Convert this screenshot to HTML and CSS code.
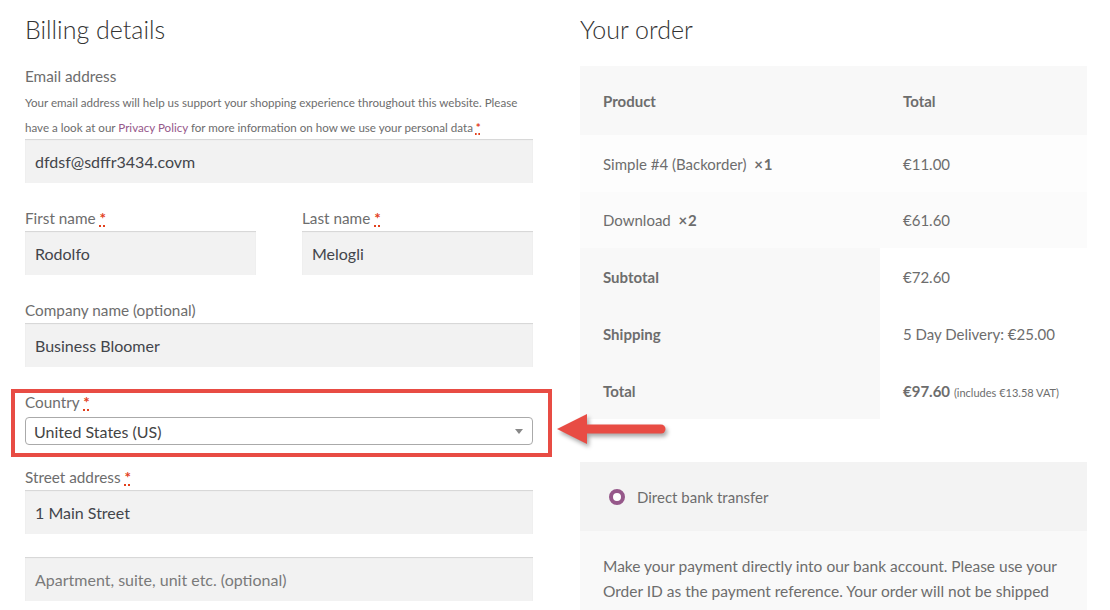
FILE: index.html
```html
<!DOCTYPE html>
<html>
<head>
<meta charset="utf-8">
<link rel="stylesheet" href="styles.css">
</head>
<body>
<div class="page">
  <div class="col billing">
    <h3 class="title">Billing details</h3>
    <div class="field">
      <label class="lbl">Email address</label>
      <p class="desc">Your email address will help us support your shopping experience throughout this website. Please have a look at our <a class="link">Privacy Policy</a> for more information on how we use your personal data <abbr class="req">*</abbr></p>
      <div class="input">dfdsf@sdffr3434.covm</div>
    </div>
    <div class="row2">
      <div class="field">
        <label class="lbl">First name <abbr class="req">*</abbr></label>
        <div class="input">Rodolfo</div>
      </div>
      <div class="field">
        <label class="lbl">Last name <abbr class="req">*</abbr></label>
        <div class="input">Melogli</div>
      </div>
    </div>
    <div class="field">
      <label class="lbl">Company name (optional)</label>
      <div class="input">Business Bloomer</div>
    </div>
    <div class="field country">
      <label class="lbl">Country <abbr class="req">*</abbr></label>
      <div class="select"><span>United States (US)</span><span class="caret"></span></div>
      <div class="highlight"></div>
      <svg class="arrow" width="120" height="44" viewBox="0 0 120 44">
        <line x1="30" y1="20" x2="106" y2="20" stroke="#e84c44" stroke-width="9" stroke-linecap="round"/>
        <polygon points="2,20 32,5 32,35" fill="#e84c44"/>
      </svg>
    </div>
    <div class="field">
      <label class="lbl">Street address <abbr class="req">*</abbr></label>
      <div class="input">1 Main Street</div>
    </div>
    <div class="field">
      <div class="input placeholder">Apartment, suite, unit etc. (optional)</div>
    </div>
  </div>
  <div class="col order">
    <h3 class="title">Your order</h3>
    <table class="otable">
      <thead>
        <tr><th class="c1">Product</th><th class="c2">Total</th></tr>
      </thead>
      <tbody>
        <tr class="r1"><td>Simple #4 (Backorder)&nbsp; <strong>×&#8202;1</strong></td><td>€11.00</td></tr>
        <tr class="r2"><td>Download&nbsp; <strong>×&#8202;2</strong></td><td>€61.60</td></tr>
      </tbody>
      <tfoot>
        <tr><th>Subtotal</th><td>€72.60</td></tr>
        <tr><th>Shipping</th><td>5 Day Delivery: €25.00</td></tr>
        <tr><th>Total</th><td><strong>€97.60</strong> <small>(includes €13.58 VAT)</small></td></tr>
      </tfoot>
    </table>
    <div class="payment">
      <div class="method"><span class="radio"></span><span>Direct bank transfer</span></div>
      <div class="pbox">Make your payment directly into our bank account. Please use your Order ID as the payment reference. Your order will not be shipped</div>
    </div>
  </div>
</div>
</body>
</html>
```
FILE: styles.css
```css
html, body {
  margin: 0;
  padding: 0;
  background: #fff;
  overflow: hidden;
}
body {
  font-family: "Lato", "Noto Sans", sans-serif;
  font-size: 15px;
  color: #6d6d6d;
}
.page {
  display: grid;
  grid-template-columns: 508px 507px;
  column-gap: 47px;
  padding: 12px 0 0 25px;
  height: 598px;
  overflow: hidden;
}
.title {
  margin: 0;
  font-size: 25px;
  font-weight: 300;
  line-height: 34px;
  color: #333;
}
.field {
  display: flex;
  flex-direction: column;
  margin-bottom: 23px;
}
.billing .title { margin-bottom: 18px; }
.lbl {
  display: block;
  line-height: 24px;
  height: 24px;
  margin-bottom: 1px;
  color: #6d6d6d;
  font-size: 15.3px;
}
.desc {
  margin: 1px 0 0;
  height: 49px;
  font-size: 11.6px;
  line-height: 25px;
  color: #6d6d6d;
}
.link { color: #96588a; }
.req {
  color: #e2401c;
  text-decoration: underline dotted #e2401c;
  text-decoration-thickness: 2px;
  font-weight: 700;
  border: 0;
}
.input {
  height: 44px;
  box-sizing: border-box;
  background: #f2f2f2;
  box-shadow: inset 0 1px 1px rgba(0,0,0,.12);
  padding: 0 10px;
  display: flex;
  align-items: center;
  color: #43454b;
  font-size: 16px;
}
.input.placeholder { color: #7a7a7a; }
.row2 {
  display: grid;
  grid-template-columns: 231px 231px;
  column-gap: 46px;
}
.country {
  position: relative;
  margin-bottom: 20px;
}
.select {
  margin-top: 2px;
  height: 28px;
  box-sizing: border-box;
  border: 1px solid #aaa;
  border-radius: 4px;
  background: #fff;
  display: flex;
  align-items: center;
  justify-content: space-between;
  padding: 0 9px 0 8px;
  color: #444;
  font-size: 16px;
}
.caret {
  width: 0;
  height: 0;
  border-left: 4px solid transparent;
  border-right: 4px solid transparent;
  border-top: 5px solid #888;
}
.highlight {
  position: absolute;
  left: -14px;
  top: -1px;
  width: 533px;
  height: 60px;
  border: 4px solid #e84c44;
  pointer-events: none;
}
.arrow {
  position: absolute;
  left: 530px;
  top: 19px;
  filter: drop-shadow(2px 3px 2px rgba(0,0,0,.35));
}
.order .title { margin-bottom: 20px; }
.otable {
  width: 507px;
  border-collapse: collapse;
  border-spacing: 0;
}
.otable th, .otable td {
  text-align: left;
  padding: 0 0 0 23px;
  font-size: 15px;
  color: #6d6d6d;
}
.otable th { font-weight: 700; }
.otable thead th {
  height: 69px;
  background: #f8f8f8;
}
.otable .c1 { width: 277px; }
.otable tbody td { height: 57px; }
.otable .r1 td { background: #fdfdfd; }
.otable .r2 td { background: #fbfbfb; height: 56px; }
.otable tfoot th {
  height: 57px;
  background: #f8f8f8;
}
.otable tfoot td { background: #fff; }
.otable strong { font-weight: 700; }
.otable small { font-size: 11px; }
.payment { margin-top: 43px; }
.method {
  height: 69px;
  background: #f3f3f3;
  display: flex;
  align-items: center;
  padding-left: 29px;
  gap: 12px;
  color: #6d6d6d;
}
.radio {
  width: 8px;
  height: 8px;
  border-radius: 50%;
  border: 4px solid #96588a;
  background: #fff;
}
.pbox {
  background: #f9f9f9;
  padding: 23px 23px 0;
  line-height: 25px;
  height: 120px;
  font-size: 15.5px;
}
```
